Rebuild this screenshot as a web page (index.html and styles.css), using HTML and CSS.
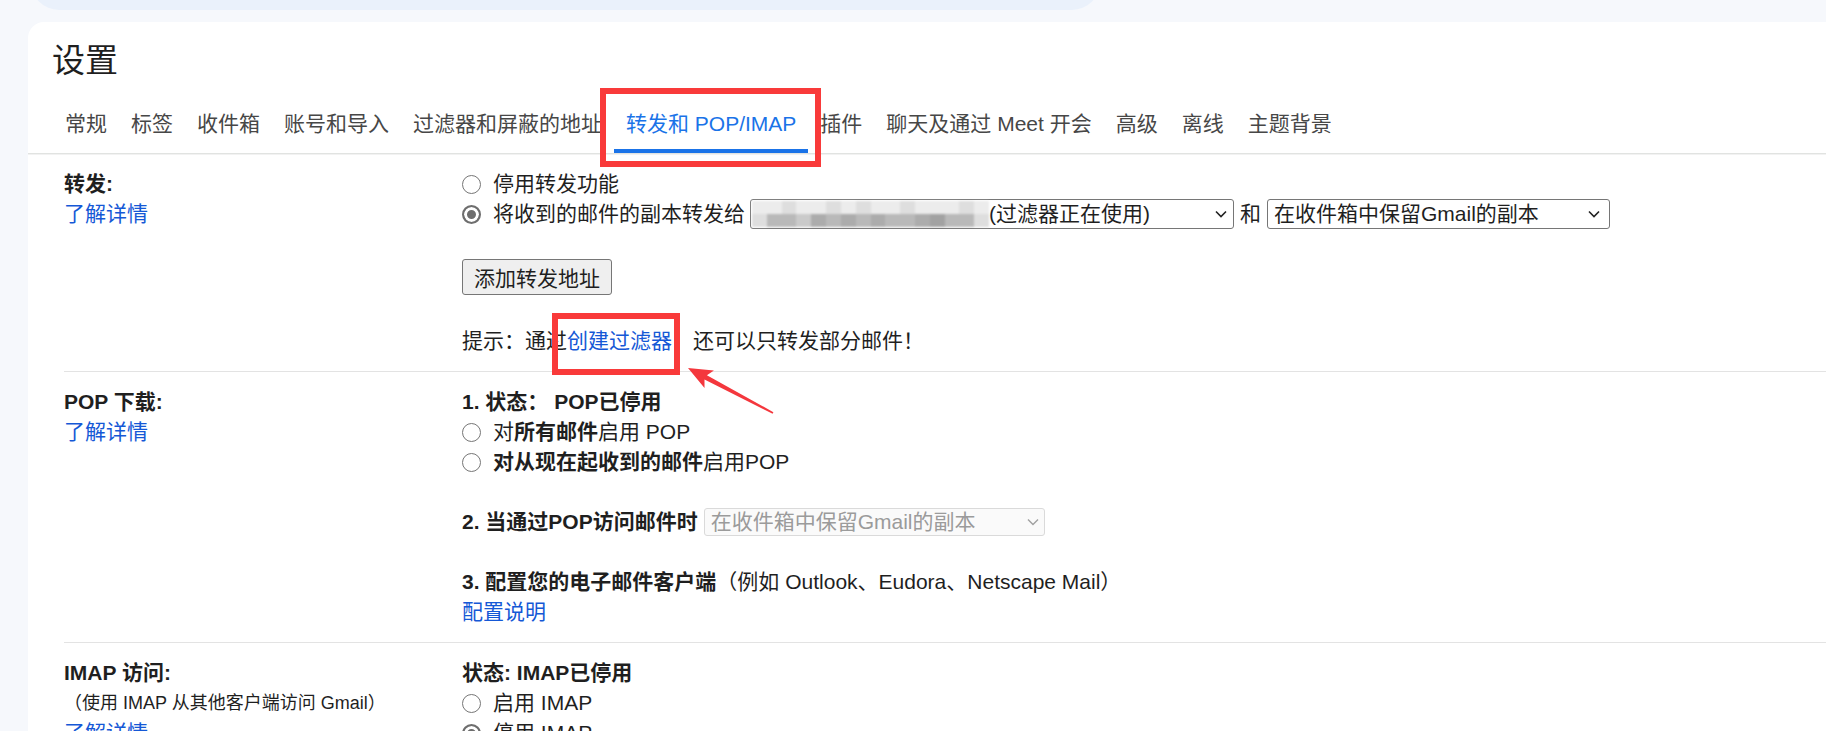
FILE: index.html
```html
<!DOCTYPE html>
<html lang="zh-CN">
<head>
<meta charset="utf-8">
<title>设置</title>
<link rel="stylesheet" href="styles.css">
</head>
<body>
<div class="topbar"><div class="search"></div></div>
<main class="card">
  <h1 class="title">设置</h1>
  <nav class="tabs">
    <span class="tab">常规</span>
    <span class="tab">标签</span>
    <span class="tab">收件箱</span>
    <span class="tab">账号和导入</span>
    <span class="tab">过滤器和屏蔽的地址</span>
    <span class="tab active">转发和 POP/IMAP</span>
    <span class="tab">插件</span>
    <span class="tab">聊天及通过 Meet 开会</span>
    <span class="tab">高级</span>
    <span class="tab">离线</span>
    <span class="tab">主题背景</span>
  </nav>

  <section class="row first">
    <div class="label">
      <div class="lab">转发:</div>
      <a class="link">了解详情</a>
    </div>
    <div class="content">
      <div class="line"><span class="radio"></span><span>停用转发功能</span></div>
      <div class="line">
        <span class="radio on"></span><span>将收到的邮件的副本转发给</span>
        <span class="sel sel-fwd">
          <span class="blur">
            <span class="brow"><i class="ca"></i><i class="ca"></i><i class="cb"></i><i class="ca"></i><i class="ca"></i><i class="cb"></i><i class="ca"></i><i class="cb"></i><i class="ca"></i><i class="ca"></i><i class="cb"></i><i class="ca"></i><i class="ca"></i><i class="ca"></i><i class="cb"></i><i class="ca"></i></span>
            <span class="brow"><i class="cb"></i><i class="cd"></i><i class="cd"></i><i class="cc"></i><i class="ce"></i><i class="cd"></i><i class="ce"></i><i class="cd"></i><i class="ce"></i><i class="cd"></i><i class="cd"></i><i class="ce"></i><i class="cf"></i><i class="cd"></i><i class="cd"></i><i class="cb"></i></span>
          </span>
          <span class="sel-text">(过滤器正在使用)</span>
          <svg class="chev" width="12" height="8" viewBox="0 0 12 8"><path d="M1 1.5l5 5 5-5" fill="none" stroke="#222" stroke-width="1.6"/></svg>
        </span>
        <span>和</span>
        <span class="sel sel-keep">
          <span class="sel-text">在收件箱中保留Gmail的副本</span>
          <svg class="chev" width="12" height="8" viewBox="0 0 12 8"><path d="M1 1.5l5 5 5-5" fill="none" stroke="#222" stroke-width="1.6"/></svg>
        </span>
      </div>
      <div class="btn-line"><button class="btn" type="button">添加转发地址</button></div>
      <div class="line hint"><span>提示：通过<a class="link">创建过滤器</a>，还可以只转发部分邮件！</span></div>
    </div>
  </section>

  <section class="row">
    <div class="label">
      <div class="lab">POP 下载:</div>
      <a class="link">了解详情</a>
    </div>
    <div class="content">
      <div class="line"><b>1. 状态：&nbsp;POP已停用</b></div>
      <div class="line"><span class="radio"></span><span>对<b>所有邮件</b>启用 POP</span></div>
      <div class="line"><span class="radio"></span><span><b>对从现在起收到的邮件</b>启用POP</span></div>
      <div class="line"></div>
      <div class="line">
        <b>2. 当通过POP访问邮件时</b>
        <span class="sel sel-dis">
          <span class="sel-text">在收件箱中保留Gmail的副本</span>
          <svg class="chev" width="12" height="8" viewBox="0 0 12 8"><path d="M1 1.5l5 5 5-5" fill="none" stroke="#a0a0a0" stroke-width="1.4"/></svg>
        </span>
      </div>
      <div class="line"></div>
      <div class="line"><span><b>3. 配置您的电子邮件客户端</b>（例如 Outlook、Eudora、Netscape Mail）</span></div>
      <div class="line"><a class="link">配置说明</a></div>
    </div>
  </section>

  <section class="row">
    <div class="label">
      <div class="lab">IMAP 访问:</div>
      <div class="note">（使用 IMAP 从其他客户端访问 Gmail）</div>
      <a class="link">了解详情</a>
    </div>
    <div class="content">
      <div class="line"><b>状态: IMAP已停用</b></div>
      <div class="line"><span class="radio"></span><span>启用 IMAP</span></div>
      <div class="line"><span class="radio on"></span><span>停用 IMAP</span></div>
    </div>
  </section>
</main>

<div class="mark mark-tab"></div>
<div class="mark mark-link"></div>
<svg class="arrow" width="100" height="60" viewBox="0 0 100 60">
  <polygon points="8,8 33.9,10.4 26.9,15.2 93.4,52.2 92.6,53.8 24.5,19.6 24.5,28 8,8" fill="#f4373d"/>
</svg>
</body>
</html>
```

FILE: styles.css
```css
html, body {
  margin: 0;
  padding: 0;
}

body {
  width: 1826px;
  height: 731px;
  overflow: hidden;
  position: relative;
  background: #f6f8fc;
  font-family: "Liberation Sans", "Noto Sans CJK SC", sans-serif;
  color: #1f1f1f;
}

.topbar {
  height: 10px;
  overflow: hidden;
  padding-left: 31px;
}

.search {
  width: 1069px;
  height: 56px;
  margin-top: -46px;
  border-radius: 28px;
  background: #eaf1fb;
}

.card {
  margin: 12px 0 0 28px;
  height: 740px;
  background: #ffffff;
  border-top-left-radius: 16px;
}

.title {
  margin: 0;
  padding: 19px 0 0 24px;
  font-size: 33px;
  line-height: 40px;
  font-weight: 400;
  color: #1f1f1f;
}

.tabs {
  display: flex;
  margin-top: 17px;
  padding-left: 25px;
  border-bottom: 1px solid #e1e3e1;
  box-shadow: 0 1px 0 #f2f2f2;
}

.tab {
  padding: 11px 12px 10px;
  border-bottom: 4px solid transparent;
  font-size: 21px;
  line-height: 30px;
  color: #474747;
  white-space: nowrap;
}

.tab.active {
  color: #1a73e8;
  border-bottom-color: #1a73e8;
}

.row {
  display: flex;
  margin-left: 36px;
  padding: 15px 0 15px;
  border-top: 1px solid #e3e3e3;
  font-size: 21px;
  line-height: 30px;
}

.row.first {
  border-top: 0;
}

.label {
  width: 398px;
  flex: none;
}

.lab {
  font-weight: 700;
  color: #1f1f1f;
}

.note {
  font-size: 18px;
  line-height: 30px;
  color: #1f1f1f;
}

.link {
  display: block;
  color: #1558d6;
  text-decoration: none;
}

.line .link,
.hint .link {
  display: inline;
}

.content {
  flex: 1;
}

.line {
  display: flex;
  align-items: center;
  height: 30px;
  white-space: nowrap;
}

.line b {
  font-weight: 700;
}

.radio {
  flex: none;
  width: 19px;
  height: 19px;
  box-sizing: border-box;
  border: 1.5px solid #767676;
  border-radius: 50%;
  margin-right: 12px;
  background: #fff;
}

.radio.on {
  border: 2px solid #6e6e6e;
  background: #6e6e6e;
  box-shadow: inset 0 0 0 3px #ffffff;
}

.sel {
  display: flex;
  align-items: center;
  height: 30px;
  box-sizing: border-box;
  border: 1px solid #767676;
  border-radius: 3px;
  padding: 0 6px 0 6px;
  background: #fff;
  color: #1f1f1f;
}

.sel-text {
  flex: 1;
  overflow: hidden;
}

.chev {
  flex: none;
}

.sel-fwd {
  width: 484px;
  margin: 0 6px 0 5px;
}

.sel-keep {
  width: 343px;
  margin-left: 6px;
  padding-right: 9px;
}

.sel-dis {
  width: 341px;
  height: 28px;
  margin-left: 6px;
  border-color: #dadada;
  background: #fafafa;
  color: #9b9b9b;
  padding-right: 5px;
}

.blur {
  display: flex;
  flex-direction: column;
  width: 237px;
  height: 26px;
  margin-left: -5px;
  flex: none;
  filter: blur(1px);
}

.brow {
  display: flex;
  flex: 1;
}

.brow i {
  flex: 1;
}

.ca { background: #ececec; }
.cb { background: #dedede; }
.cc { background: #cacaca; }
.cd { background: #b9b9b9; }
.ce { background: #acacac; }
.cf { background: #a2a2a2; }

.btn-line {
  margin-top: 30px;
  height: 36px;
}

.btn {
  display: inline-flex;
  align-items: center;
  height: 36px;
  box-sizing: border-box;
  padding: 0 11px;
  border: 1px solid #767676;
  border-radius: 3px;
  background: #efefef;
  font-family: inherit;
  font-size: 21px;
  color: #1f1f1f;
  margin: 0;
}

.hint {
  margin-top: 31px;
}

.mark {
  position: absolute;
  box-sizing: border-box;
  border: 6px solid #f93a3a;
}

.mark-tab {
  left: 600px;
  top: 88px;
  width: 221px;
  height: 79px;
}

.mark-link {
  left: 552px;
  top: 313px;
  width: 128px;
  height: 62px;
}

.arrow {
  position: absolute;
  left: 680px;
  top: 360px;
}
```
